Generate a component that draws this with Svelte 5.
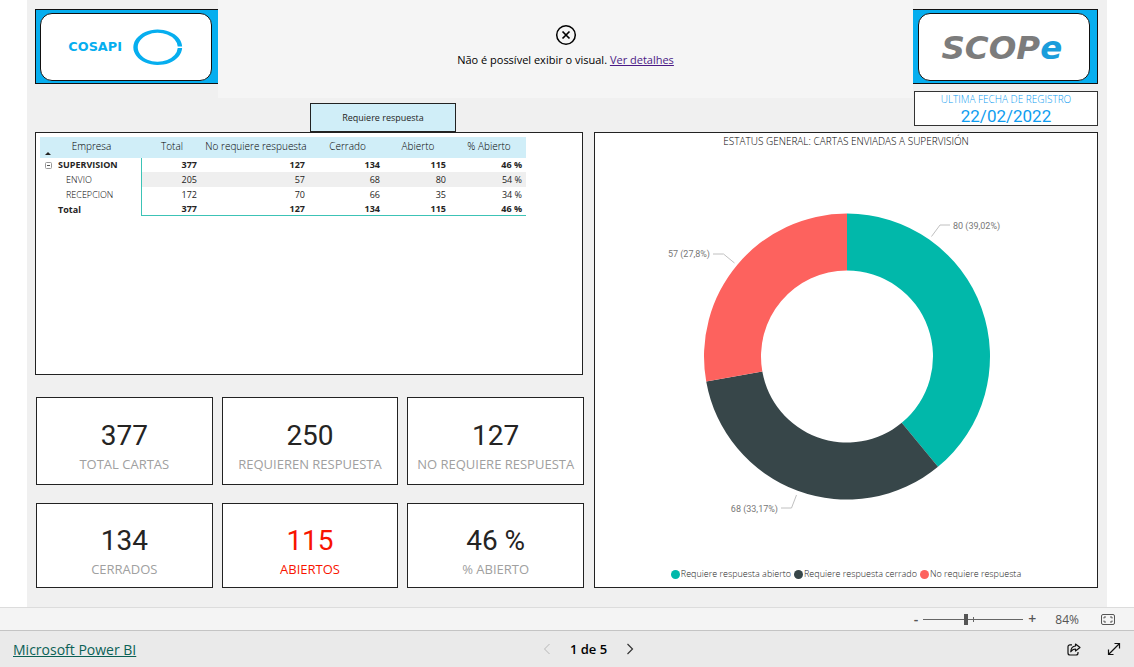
<script>
  const columns = ['Total', 'No requiere respuesta', 'Cerrado', 'Abierto', '% Abierto'];
  const rows = [
    { name: 'SUPERVISION', kind: 'group', values: ['377', '127', '134', '115', '46 %'] },
    { name: 'ENVIO', kind: 'child shaded', values: ['205', '57', '68', '80', '54 %'] },
    { name: 'RECEPCION', kind: 'child', values: ['172', '70', '66', '35', '34 %'] },
    { name: 'Total', kind: 'total', values: ['377', '127', '134', '115', '46 %'] }
  ];
  const cards = [
    { value: '377', label: 'TOTAL CARTAS' },
    { value: '250', label: 'REQUIEREN RESPUESTA' },
    { value: '127', label: 'NO REQUIERE RESPUESTA' },
    { value: '134', label: 'CERRADOS' },
    { value: '115', label: 'ABIERTOS', alert: true },
    { value: '46 %', label: '% ABIERTO' }
  ];
  const slices = [
    { name: 'Requiere respuesta abierto', value: 80, color: '#01b8aa' },
    { name: 'Requiere respuesta cerrado', value: 68, color: '#374649' },
    { name: 'No requiere respuesta', value: 57, color: '#fd625e' }
  ];
  const cx = 252, cy = 207, outer = 143, inner = 86;
  const sum = slices.reduce((t, s) => t + s.value, 0);
  const point = (r, a) => `${cx + r * Math.sin(a)} ${cy - r * Math.cos(a)}`;
  let angle = 0;
  const arcs = slices.map((s) => {
    const a = angle;
    const b = (angle += (s.value / sum) * 2 * Math.PI);
    const large = b - a > Math.PI ? 1 : 0;
    return {
      color: s.color,
      d: `M${point(outer, a)}A${outer} ${outer} 0 ${large} 1 ${point(outer, b)}L${point(inner, b)}A${inner} ${inner} 0 ${large} 0 ${point(inner, a)}Z`
    };
  });
  let zoom = $state(42);
</script>

<div class="page">
  <main class="stage">
    <div class="canvas">
      <header class="top">
        <div class="logo">
          <div class="plate">
            <svg viewBox="0 0 171 67" role="img" aria-label="COSAPI">
              <text x="27" y="38" class="cosapi">COSAPI</text>
              <path fill="#06aeef" fill-rule="evenodd" d="M142.500 33A24.800 18 0 1 0 142.500 34.600H138A20.300 14.700 0 1 1 138 33Z" />
            </svg>
          </div>
        </div>
        <div class="middle">
          <div class="error">
            <svg width="22" height="22" viewBox="0 0 22 22" fill="none" stroke="#000">
              <circle cx="11" cy="11" r="9.300" stroke-width="1.500" />
              <path d="M7.500 7.500l7 7M14.500 7.500l-7 7" stroke-width="1.700" />
            </svg>
            <p>Não é possível exibir o visual. <a href="#detalhes">Ver detalhes</a></p>
          </div>
          <button class="filter">Requiere respuesta</button>
        </div>
        <div class="right">
          <div class="logo">
            <div class="plate">
              <svg viewBox="0 0 171 67" role="img" aria-label="SCOPe">
                <text x="22" y="46" class="scope">SCOP<tspan fill="#1a9ddb">e</tspan></text>
              </svg>
            </div>
          </div>
          <div class="date">
            <span>ULTIMA FECHA DE REGISTRO</span>
            <strong>22/02/2022</strong>
          </div>
        </div>
      </header>

      <div class="content">
        <div class="left">
          <section class="panel matrix">
            <table>
              <colgroup>
                <col class="c0" /><col class="c1" /><col class="c2" /><col class="c3" /><col class="c4" /><col class="c5" />
              </colgroup>
              <thead>
                <tr>
                  <th class="first" scope="col">Empresa<svg class="sort" width="6" height="3" viewBox="0 0 6 3"><path d="M0 3L3 0L6 3Z" fill="#252423" /></svg></th>
                  {#each columns as c}<th scope="col">{c}</th>{/each}
                </tr>
              </thead>
              <tbody>
                {#each rows as r}
                  <tr class={r.kind}>
                    <th scope="row">
                      <span class="name">
                        {#if r.kind === 'group'}
                          <button class="toggle" aria-label="Contraer">
                            <svg width="7" height="7" viewBox="0 0 7 7" fill="none" stroke="#999"><rect x=".5" y=".5" width="6" height="6" rx="1" /><path d="M2 3.500h3" stroke="#555" /></svg>
                          </button>
                        {/if}
                        {r.name}
                      </span>
                    </th>
                    {#each r.values as v}<td>{v}</td>{/each}
                  </tr>
                {/each}
              </tbody>
            </table>
          </section>
          <section class="cards">
            {#each cards as c}
              <article class="panel card" class:alert={c.alert}>
                <strong>{c.value}</strong>
                <span>{c.label}</span>
              </article>
            {/each}
          </section>
        </div>

        <section class="panel chart">
          <h2>ESTATUS GENERAL: CARTAS ENVIADAS A SUPERVISIÓN</h2>
          <svg viewBox="0 0 502 416" role="img" aria-label="Estatus general">
            {#each arcs as a}<path d={a.d} fill={a.color} />{/each}
            <g fill="none" stroke="#c0c0c0">
              <path d="M336.500 87L345 75.500H355" />
              <path d="M118 104.500H128.500L139.500 113.500" />
              <path d="M186 358.500H196.500L201.500 345.500" />
            </g>
            <g class="labels">
              <text x="358" y="79">80 (39,02%)</text>
              <text x="115" y="107" text-anchor="end">57 (27,8%)</text>
              <text x="183" y="362" text-anchor="end">68 (33,17%)</text>
            </g>
          </svg>
          <ul>
            {#each slices as s}<li><i style:background={s.color}></i>{s.name}</li>{/each}
          </ul>
        </section>
      </div>
    </div>
  </main>

  <div class="zoombar">
    <button class="step" aria-label="Reducir">-</button>
    <input type="range" min="0" max="100" bind:value={zoom} aria-label="Zoom" />
    <button class="step" aria-label="Ampliar">+</button>
    <output>84%</output>
    <button aria-label="Ajustar a la página">
      <svg width="14" height="11" viewBox="0 0 14 11" fill="none" stroke="#555">
        <rect x=".5" y=".5" width="13" height="10" rx="1.500" />
        <path d="M3 4.500V3H5M9 3h2v1.500M11 6.500V8H9M5 8H3V6.500" />
      </svg>
    </button>
  </div>

  <footer>
    <a href="#powerbi">Microsoft Power BI</a>
    <nav>
      <button aria-label="Anterior" disabled><svg width="8" height="12" viewBox="0 0 8 12" fill="none" stroke="#b8b8b8"><path d="M6.500 1L1.500 6L6.500 11" /></svg></button>
      <span>1 de 5</span>
      <button aria-label="Siguiente"><svg width="8" height="12" viewBox="0 0 8 12" fill="none" stroke="#333" stroke-width="1.200"><path d="M1.500 1L6.500 6L1.500 11" /></svg></button>
    </nav>
    <div class="actions">
      <button aria-label="Compartir">
        <svg width="14" height="13" viewBox="0 0 14 13" fill="none" stroke="#111" stroke-width="1.200" stroke-linejoin="round">
          <path d="M5 1.800H3A2 2 0 0 0 1 3.800V10A2 2 0 0 0 3 12H9A2 2 0 0 0 11 10V9" />
          <path d="M8.500 1L13 4.500L8.500 8V6Q5.500 6 3.800 8.800Q4 3.200 8.500 3Z" />
        </svg>
      </button>
      <button aria-label="Pantalla completa">
        <svg width="14" height="14" viewBox="0 0 14 14" fill="none" stroke="#111" stroke-width="1.200">
          <path d="M1.500 12.500L12.500 1.500M7.500 1.500H12.500V6.500M1.500 7.500V12.500H6.500" />
        </svg>
      </button>
    </div>
  </footer>
</div>

<style>
  :global(body) { margin: 0; background: #fff; }
  .page { min-height: 100vh; display: flex; flex-direction: column; font-family: "Open Sans", "Noto Sans", sans-serif; color: #252423; }
  .page * { box-sizing: border-box; }
  button { border: 0; padding: 0; background: none; color: inherit; font: inherit; cursor: pointer; display: inline-flex; align-items: center; justify-content: center; }
  svg { display: block; }
  .stage { flex: 1; padding: 0 27px; }
  .canvas { background: #f0f0f0; min-height: 100%; padding: 0 9px 19px 8px; }
  .panel { background: #fff; border: 1px solid #222; }

  .top { display: grid; grid-template-columns: 183px 1fr 185px; height: 132px; }
  .logo { margin-top: 9px; height: 75px; background: #06aeef; border: 1px solid #111; padding: 3px 6px 2px 4px; border-right: 0; }
  .plate { height: 100%; background: #fff; border: 1px solid #111; border-radius: 12px; }
  .plate svg { width: 100%; height: 100%; }
  .cosapi { font: 700 13px "DejaVu Sans", sans-serif; fill: #06aeef; }
  .scope { font: italic 700 33px "DejaVu Sans", sans-serif; fill: #7c7c7c; }
  .middle { display: flex; flex-direction: column; gap: 5px; }
  .error { height: 98px; background: #f5f5f5; display: flex; flex-direction: column; align-items: center; padding-top: 24px; gap: 5px; font-size: 11px; line-height: 18px; color: #000; }
  .error p { margin: 0; }
  .error a { color: #4b1a86; }
  .filter { width: 146px; height: 29px; margin-left: 92px; background: #d0eef8; border: 1px solid #222; font-size: 9px; }
  .right { display: flex; flex-direction: column; gap: 7px; }
  .right .logo { border-left: 0; border-right: 1px solid #111; padding-left: 5px; padding-right: 7px; }
  .date { height: 35px; margin-left: 1px; background: #fff; border: 1px solid #333; color: #0f9df0; text-align: center; display: flex; flex-direction: column; }
  .date span { font-size: 10px; line-height: 15px; font-weight: 300; }
  .date strong { font: 400 17px/18px Roboto, sans-serif; }

  .content { display: grid; grid-template-columns: 548fr 504fr; gap: 11px; }
  .left { display: flex; flex-direction: column; gap: 22px; }
  .matrix { height: 243px; padding: 4px; }
  table { width: 486px; max-width: 100%; table-layout: fixed; border-collapse: separate; border-spacing: 0; font-size: 9px; line-height: 14px; }
  .c0 { width: 101px; } .c1 { width: 60px; } .c2 { width: 108px; } .c3 { width: 75px; } .c4 { width: 66px; } .c5 { width: 76px; }
  thead th { height: 21px; padding: 2px 0 0 2px; background: #d0eef8; font-weight: 300; font-size: 10px; vertical-align: top; white-space: nowrap; color: #000; }
  .first { position: relative; }
  .sort { position: absolute; left: 5px; bottom: 3px; }
  tbody tr { height: 14px; }
  tbody .child { height: 15px; }
  tbody th { padding: 0 0 0 18px; text-align: left; }
  tbody td { padding: 0 4px 0 0; text-align: right; }
  .child th { padding-left: 26px; font-weight: 300; color: #000; }
  .group td, .total td { font-weight: 700; }
  .shaded td { background: #efefef; }
  tbody td:nth-child(2) { border-left: 1px solid #3cc3b6; }
  .total { line-height: 13px; }
  .total td { border-bottom: 1px solid #3cc3b6; }
  .group th { padding-left: 5px; }
  .name { display: flex; align-items: center; gap: 6px; }

  .cards { display: grid; grid-template-columns: repeat(3, 1fr); grid-template-rows: 88px 85px; gap: 18px 9px; margin: 0 -1px 0 1px; }
  .card { display: flex; flex-direction: column; align-items: center; justify-content: center; padding-top: 10px; }
  .card strong { font: 400 28px/36px Roboto, sans-serif; }
  .card span { font-size: 13px; line-height: 20px; color: #a0a0a0; white-space: nowrap; }
  .alert strong, .card.alert span { color: #f81400; }

  .chart { display: flex; flex-direction: column; }
  h2 { margin: 0; font-size: 10px; line-height: 16px; font-weight: 300; text-align: center; color: #000; }
  .chart > svg { width: 100%; flex: 1; }
  .labels { font: 9px Roboto, sans-serif; fill: #777; }
  ul { margin: 0; padding: 0 0 5px; list-style: none; display: flex; justify-content: center; gap: 3px; font-size: 9px; font-weight: 300; line-height: 16px; color: #222; }
  li { display: flex; align-items: center; gap: 1px; }
  li i { width: 9px; height: 9px; border-radius: 50%; }

  .zoombar { height: 24px; border-top: 1px solid #dcdcdc; border-bottom: 1px solid #c4c4c4; background: #f4f4f4; display: flex; align-items: center; justify-content: flex-end; gap: 5px; padding-right: 19px; font-size: 12px; color: #555; }
  .step { font-size: 14px; font-weight: 600; line-height: 16px; }
  .zoombar output { margin: 0 17px 0 14px; }
  input { appearance: none; width: 100px; height: 13px; margin: 0; background: linear-gradient(#666, #666) 50% 50% / 1px 5px no-repeat, linear-gradient(#666, #666) 50% 50% / 100% 1px no-repeat; }
  input::-webkit-slider-thumb { appearance: none; width: 4px; height: 11px; background: #555; }
  footer { height: 36px; background: #eaeaea; display: grid; grid-template-columns: 1fr auto 1fr; align-items: center; padding: 0 13px; font-size: 14px; }
  footer a { color: #0b6156; }
  nav { display: flex; align-items: center; gap: 19px; padding-left: 43px; font-size: 13px; font-weight: 600; color: #000; }
  .actions { display: flex; justify-content: flex-end; gap: 26px; }
</style>
